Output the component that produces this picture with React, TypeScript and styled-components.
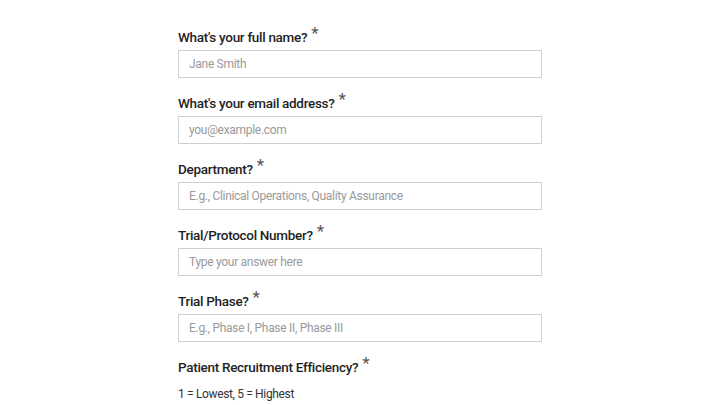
import styled, { createGlobalStyle } from "styled-components";

const GlobalStyle = createGlobalStyle`
	body {
		margin: 0;
		background: #ffffff;
		font-family: Roboto, "Noto Sans", sans-serif;
	}
`;

const Page = styled.div`
	width: 720px;
	height: 405px;
	overflow: hidden;
	padding: 27px 0 0 178px;
	box-sizing: border-box;
`;

const Form = styled.form`
	width: 364px;
	display: flex;
	flex-direction: column;
`;

const Field = styled.div`
	display: flex;
	flex-direction: column;
	margin-bottom: 15px;
`;

const Label = styled.label`
	height: 20px;
	line-height: 20px;
	font-size: 13.5px;
	font-weight: 500;
	letter-spacing: -0.3px;
	color: #1f1f1f;
	margin-bottom: 3px;
	display: flex;
	align-items: flex-start;
`;

const Required = styled.span`
	font-size: 17px;
	font-weight: 400;
	color: #555;
	margin-left: 4px;
	line-height: 16px;
	margin-top: -2px;
`;

const Input = styled.input`
	height: 28px;
	box-sizing: border-box;
	border: 1px solid #cfcfcf;
	border-radius: 1px;
	padding: 0 10px;
	font-family: inherit;
	font-size: 12px;
	letter-spacing: -0.3px;
	color: #333;
	outline: none;
	&::placeholder {
		color: #9a9a9a;
	}
`;

const Hint = styled.div`
	font-size: 12px;
	letter-spacing: -0.35px;
	color: #333;
	line-height: 20px;
	margin-top: 4px;
`;

const fields = [
	{ label: "What's your full name?", placeholder: "Jane Smith" },
	{ label: "What's your email address?", placeholder: "you@example.com" },
	{ label: "Department?", placeholder: "E.g., Clinical Operations, Quality Assurance" },
	{ label: "Trial/Protocol Number?", placeholder: "Type your answer here" },
	{ label: "Trial Phase?", placeholder: "E.g., Phase I, Phase II, Phase III" },
];

export default function App() {
	return (
		<Page>
			<GlobalStyle />
			<Form>
				{fields.map((f) => (
					<Field key={f.label}>
						<Label>
							{f.label}
							<Required>*</Required>
						</Label>
						<Input placeholder={f.placeholder} />
					</Field>
				))}
				<Field>
					<Label>
						Patient Recruitment Efficiency?
						<Required>*</Required>
					</Label>
					<Hint>1 = Lowest, 5 = Highest</Hint>
				</Field>
			</Form>
		</Page>
	);
}
